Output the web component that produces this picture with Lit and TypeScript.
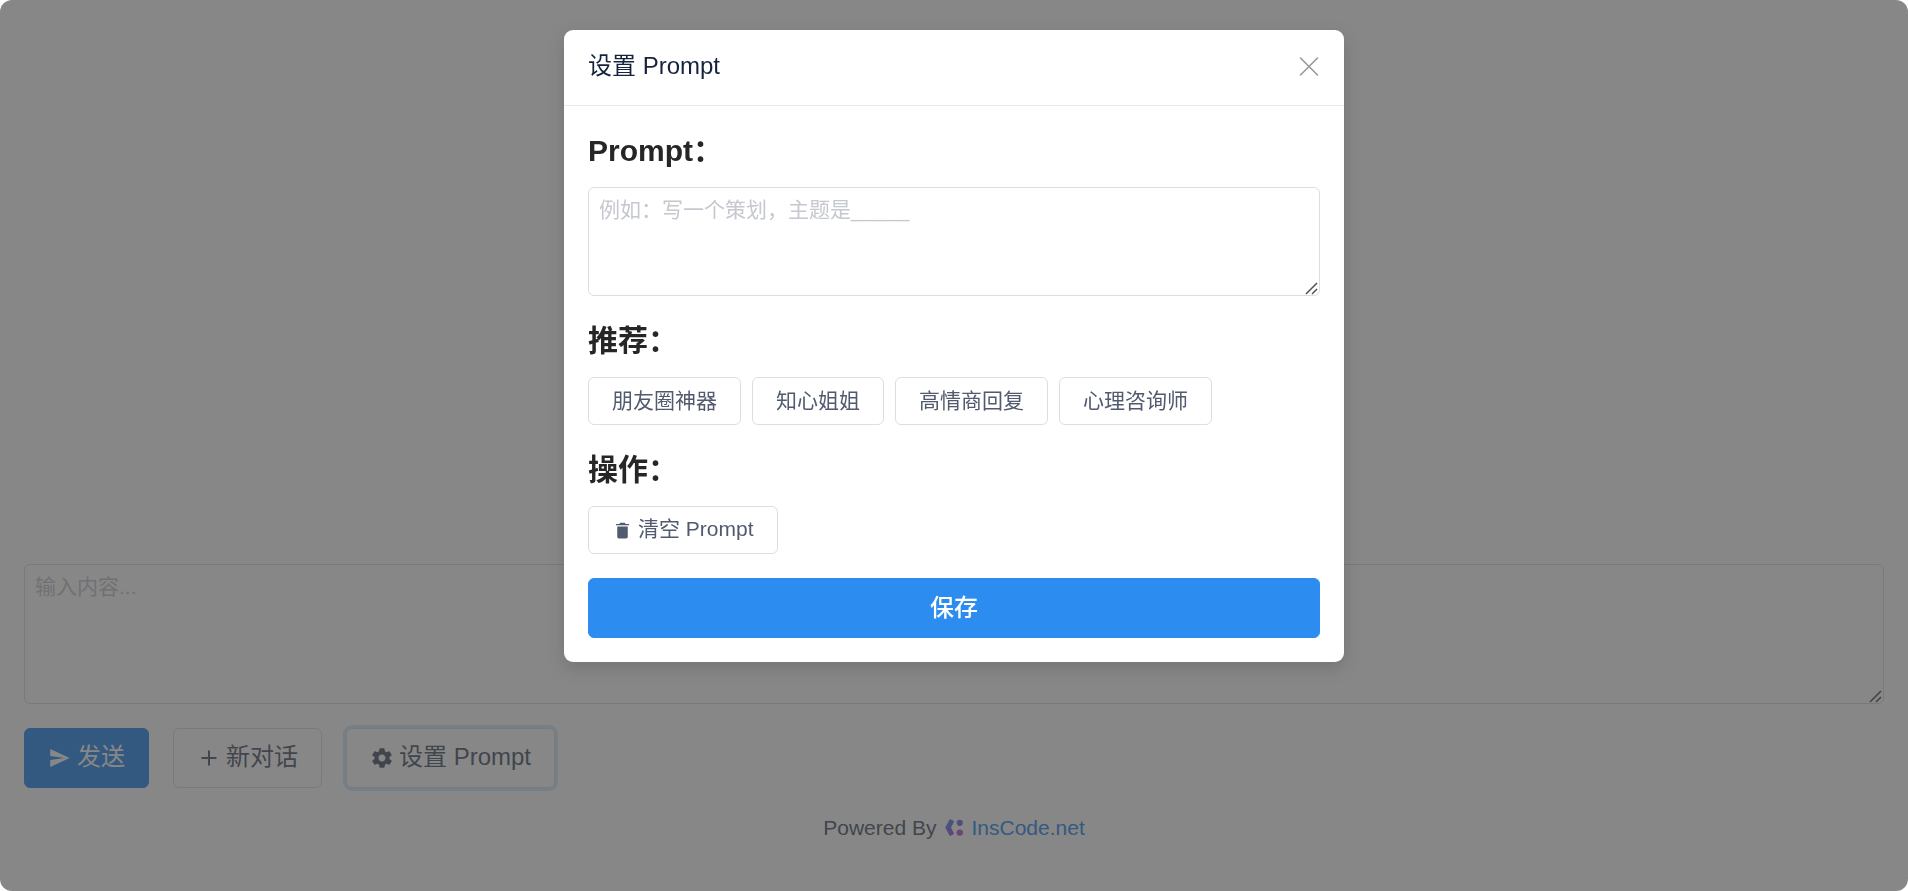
import { LitElement, html, css, svg } from "lit";
import { customElement, state } from "lit/decorators.js";

const icons = {
  send: svg`<path d="M48 448l416-192L48 64v149.333L346 256 48 298.667z"/>`,
  add: svg`<path d="M416 277.333H277.333V416h-42.666V277.333H96v-42.666h138.667V96h42.666v138.667H416v42.666z"/>`,
  trash: svg`<path d="M128 405.429C128 428.846 147.198 448 170.667 448h170.667C364.802 448 384 428.846 384 405.429V160H128v245.429zM416 96h-80l-26.785-32H202.786L176 96H96v32h320V96z"/>`,
  settings: svg`<path d="M413.967 276.8c1.06-6.235 1.06-13.518 1.06-20.8s-1.06-13.518-1.06-20.8l44.667-34.318c4.26-3.118 5.319-8.317 2.13-13.518L418.215 115.6c-2.129-4.164-8.507-6.235-12.767-4.164l-53.186 20.801c-10.638-8.32-23.403-15.601-36.16-20.801l-7.448-55.117c-1.06-4.154-5.319-8.318-10.638-8.318h-85.098c-5.318 0-9.577 4.164-10.637 8.318l-8.508 55.117c-12.767 5.2-24.464 12.482-36.171 20.801l-53.186-20.801c-5.319-2.071-10.638 0-12.767 4.164L49.1 187.365c-2.119 4.153-1.061 10.399 2.129 13.518L96.97 235.2c0 7.282-1.06 13.518-1.06 20.8s1.06 13.518 1.06 20.8l-44.668 34.318c-4.26 3.118-5.318 8.317-2.13 13.518L92.721 396.4c2.13 4.164 8.508 6.235 12.767 4.164l53.187-20.801c10.637 8.32 23.402 15.601 36.16 20.801l8.508 55.117c1.069 5.2 5.318 8.318 10.637 8.318h85.098c5.319 0 9.578-4.164 10.638-8.318l8.518-55.117c12.757-5.2 24.464-12.482 36.16-20.801l53.187 20.801c5.318 2.071 10.637 0 12.767-4.164l42.549-71.765c2.129-4.153 1.06-10.399-2.13-13.518l-46.8-34.317zm-158.499 52c-41.489 0-74.46-32.235-74.46-72.8s32.971-72.8 74.46-72.8 74.461 32.235 74.461 72.8-32.972 72.8-74.461 72.8z"/>`,
};

const icon = (name: keyof typeof icons) =>
  html`<svg class="icon" viewBox="0 0 512 512" aria-hidden="true">${icons[name]}</svg>`;

@customElement("app-root")
export class AppRoot extends LitElement {
  @state() private open = true;
  @state() private prompt = "";

  private presets = ["朋友圈神器", "知心姐姐", "高情商回复", "心理咨询师"];

  static styles = css`
    :host {
      display: block;
      font-family: "Liberation Sans", "Noto Sans CJK SC", sans-serif;
      font-size: 21px;
      line-height: 32px;
      color: #515a6e;
    }
    * {
      box-sizing: border-box;
    }
    .page {
      display: flex;
      flex-direction: column;
      gap: 24px;
      min-height: 100vh;
      padding: 24px 24px 48px;
      background: #fff;
    }
    .messages {
      flex: 1;
    }
    textarea {
      display: block;
      width: 100%;
      margin: 0;
      padding: 6px 10px;
      border: 1px solid #dcdee2;
      border-radius: 6px;
      background: #fff;
      color: #515a6e;
      font: inherit;
      resize: vertical;
      outline: none;
    }
    textarea::placeholder {
      color: #c5c8ce;
    }
    textarea::-webkit-resizer {
      background: url("data:image/svg+xml,%3Csvg xmlns='http://www.w3.org/2000/svg' width='15' height='15'%3E%3Cpath d='M2.5 13.5l10-10M8.5 13.5l4-4' fill='none' stroke='%23505050' stroke-width='1.5' stroke-linecap='square'/%3E%3C/svg%3E")
        right bottom no-repeat;
    }
    .message-box {
      height: 140px;
    }
    .prompt-box {
      height: 109px;
    }
    .toolbar {
      display: flex;
      flex-wrap: wrap;
      gap: 24px;
    }
    .btn {
      display: inline-flex;
      align-items: center;
      justify-content: center;
      gap: 5px;
      height: 48px;
      padding: 0 23px;
      border: 1px solid #dcdee2;
      border-radius: 6px;
      background: #fff;
      color: #515a6e;
      font: inherit;
      white-space: nowrap;
      cursor: pointer;
    }
    .btn-label {
      margin-bottom: 2px;
    }
    .large {
      height: 60px;
      font-size: 24px;
    }
    .primary {
      border-color: #2d8cf0;
      background: #2d8cf0;
      color: #fff;
    }
    .active {
      box-shadow: 0 0 0 3px rgba(45, 140, 240, 0.2);
    }
    .block {
      width: 100%;
      margin-top: 24px;
    }
    .save {
      font-weight: 500;
    }
    .icon {
      width: 1em;
      height: 1em;
      fill: currentColor;
    }
    .footer {
      display: flex;
      align-items: center;
      justify-content: center;
      gap: 7px;
      line-height: 31px;
    }
    .footer-link {
      display: inline-flex;
      align-items: center;
      gap: 7px;
      color: #2d8cf0;
      text-decoration: none;
    }
    .logo {
      width: 21px;
      height: 21px;
    }
    .mask {
      position: fixed;
      inset: 0;
      display: flex;
      align-items: flex-start;
      justify-content: center;
      padding: 30px 24px;
      overflow: auto;
      background: rgba(55, 55, 55, 0.6);
      border-radius: 12px;
    }
    .modal {
      width: 780px;
      max-width: 100%;
      border-radius: 9px;
      background: #fff;
      box-shadow: 0 6px 18px rgba(0, 0, 0, 0.15);
    }
    .modal-header {
      display: flex;
      align-items: center;
      justify-content: space-between;
      padding: 21px 24px 24px;
      border-bottom: 1px solid #e8eaec;
    }
    .modal-title {
      margin: 0;
      color: #17233d;
      font-size: 24px;
      font-weight: 400;
      line-height: 30px;
    }
    .close {
      display: flex;
      padding: 0;
      border: 0;
      background: none;
      color: #999;
      cursor: pointer;
    }
    .close-icon {
      width: 22px;
      height: 22px;
      fill: none;
      stroke: currentColor;
      stroke-width: 1.6;
      stroke-linecap: round;
    }
    .modal-body {
      padding: 24px;
    }
    .section {
      display: block;
      margin: 24px 0 15px;
      color: #262626;
      font-size: 30px;
      font-weight: 700;
      line-height: 42px;
    }
    .section:first-child {
      margin-top: 0;
    }
    .choices {
      display: flex;
      flex-wrap: wrap;
      gap: 11px;
    }
  `;

  render() {
    return html`
      <main class="page">
        <div class="messages"></div>
        <textarea class="message-box" aria-label="输入内容" placeholder="输入内容..."></textarea>
        <div class="toolbar">
          <button class="btn large primary" type="button">${icon("send")}<span class="btn-label">发送</span></button>
          <button class="btn large" type="button">${icon("add")}<span class="btn-label">新对话</span></button>
          <button
            class="btn large ${this.open ? "active" : ""}"
            type="button"
            @click=${() => (this.open = true)}
          >
            ${icon("settings")}<span class="btn-label">设置 Prompt</span>
          </button>
        </div>
        <footer class="footer">
          <span>Powered By</span>
          <a class="footer-link" href="#">
            <svg class="logo" viewBox="0 0 21 21" aria-hidden="true">
              <defs>
                <linearGradient id="brand" gradientUnits="userSpaceOnUse" x1="8" y1="2" x2="8" y2="19">
                  <stop offset="0" stop-color="#3f8cf0" />
                  <stop offset="1" stop-color="#a45ad8" />
                </linearGradient>
              </defs>
              <path
                d="M7 2.6 10.6 4.4 7.6 10.6 10.6 16.8 7 18.6 2.8 10.6z"
                fill="url(#brand)"
                stroke="url(#brand)"
                stroke-width="1"
                stroke-linejoin="round"
              />
              <circle cx="16.8" cy="5.8" r="3.1" fill="#7a72e0" />
              <circle cx="16.8" cy="15.6" r="3.2" fill="#b95bd0" />
            </svg>
            <span>InsCode.net</span>
          </a>
        </footer>
      </main>
      ${this.open ? this.renderModal() : null}
    `;
  }

  private renderModal() {
    return html`
      <div class="mask">
        <section class="modal" role="dialog" aria-modal="true" aria-labelledby="title">
          <header class="modal-header">
            <h1 class="modal-title" id="title">设置 Prompt</h1>
            <button class="close" type="button" aria-label="关闭" @click=${() => (this.open = false)}>
              <svg class="close-icon" viewBox="0 0 22 22" aria-hidden="true">
                <path d="M2.5 3l17 17M19.5 3l-17 17" />
              </svg>
            </button>
          </header>
          <div class="modal-body">
            <label class="section" for="prompt">Prompt：</label>
            <textarea
              class="prompt-box"
              id="prompt"
              placeholder="例如：写一个策划，主题是_____"
              .value=${this.prompt}
              @input=${(e: Event) => (this.prompt = (e.target as HTMLTextAreaElement).value)}
            ></textarea>
            <h2 class="section">推荐：</h2>
            <div class="choices">
              ${this.presets.map(
                (name) => html`<button class="btn" type="button" @click=${() => (this.prompt = name)}>${name}</button>`
              )}
            </div>
            <h2 class="section">操作：</h2>
            <div class="choices">
              <button class="btn" type="button" @click=${() => (this.prompt = "")}>
                ${icon("trash")}<span class="btn-label">清空 Prompt</span>
              </button>
            </div>
            <button class="btn large primary block save" type="button" @click=${() => (this.open = false)}>
              保存
            </button>
          </div>
        </section>
      </div>
    `;
  }
}
